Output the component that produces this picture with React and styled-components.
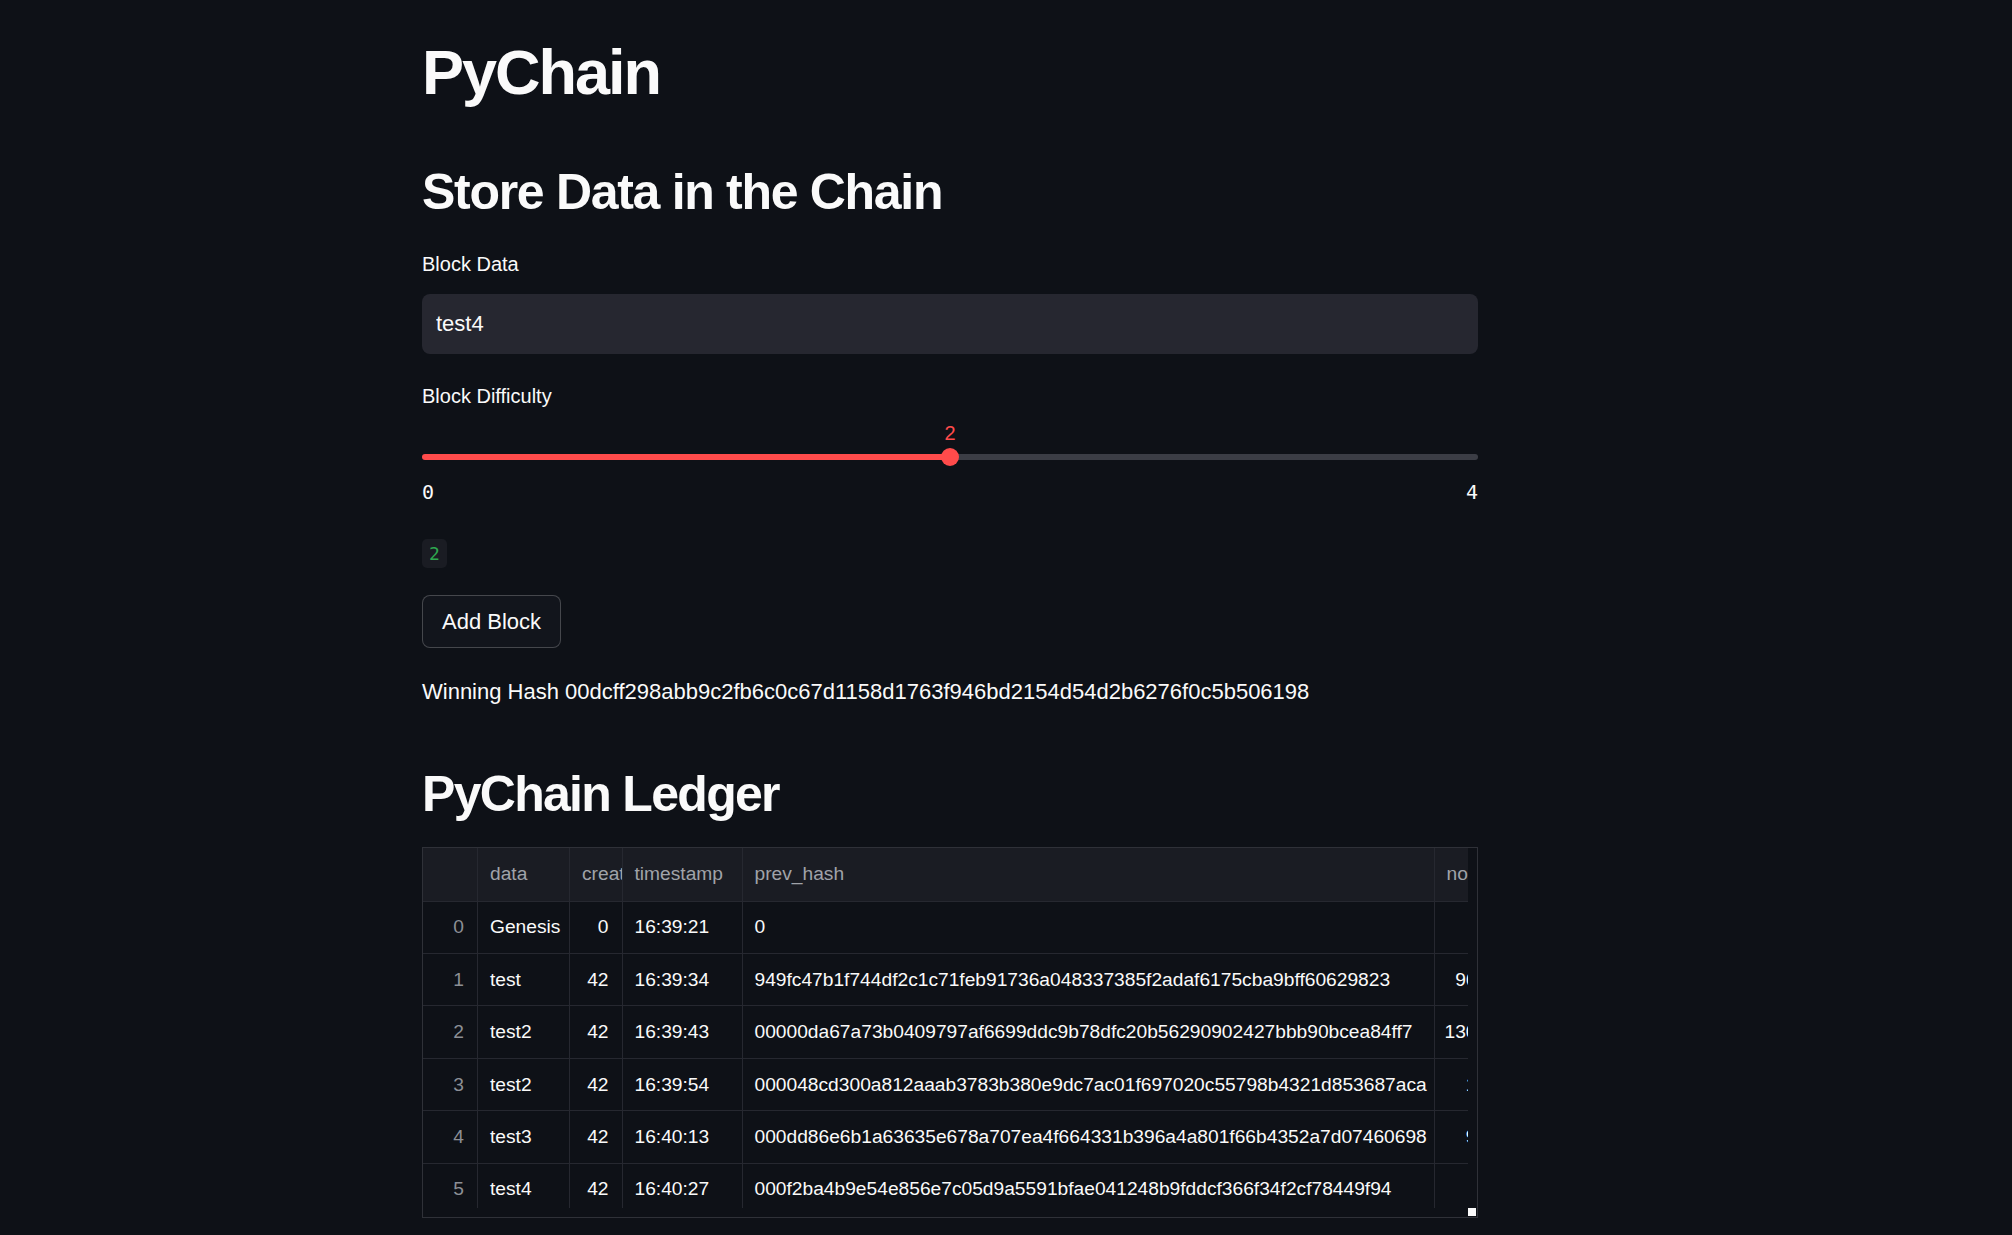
import React from "react";
import styled, { createGlobalStyle } from "styled-components";

const GlobalStyle = createGlobalStyle`
  html, body {
    margin: 0;
    padding: 0;
    background: #0e1117;
  }
  body {
    font-family: "Liberation Sans", Arial, sans-serif;
    color: #fafafa;
  }
  * { box-sizing: border-box; }
`;

const Page = styled.main`
  width: 1056px;
  margin-left: 422px;
  padding-top: 32px;
  padding-bottom: 18px;
  display: flex;
  flex-direction: column;
`;

const Title = styled.h1`
  margin: 0;
  font-size: 63px;
  line-height: 80px;
  font-weight: 700;
  letter-spacing: -2px;
`;

const Heading = styled.h2`
  margin: ${(p) => p.$top}px 0 0;
  font-size: 50px;
  line-height: 64px;
  font-weight: 700;
  letter-spacing: ${(p) => p.$spacing}px;
`;

const Label = styled.label`
  display: block;
  margin-top: ${(p) => p.$top}px;
  font-size: 20px;
  line-height: 28px;
  color: #fafafa;
`;

const TextInput = styled.input`
  display: block;
  width: 100%;
  height: 60px;
  margin-top: 16px;
  padding: 0 14px;
  border: none;
  border-radius: 8px;
  background: #262730;
  color: #fafafa;
  font-family: inherit;
  font-size: 22px;
  outline: none;
`;

const SliderWrap = styled.div`
  display: flex;
  flex-direction: column;
  margin-top: 11px;
`;

const ValueRow = styled.div`
  position: relative;
  height: 24px;
`;

const ValueText = styled.span`
  position: absolute;
  top: 0;
  transform: translateX(-50%);
  color: #ff4b4b;
  font-size: 20px;
  line-height: 24px;
`;

const TrackRow = styled.div`
  position: relative;
  height: 18px;
  margin-top: 3px;
  display: flex;
  align-items: center;
`;

const Rail = styled.div`
  flex: 1;
  height: 6px;
  border-radius: 3px;
`;

const Thumb = styled.div`
  position: absolute;
  top: 0;
  width: 18px;
  height: 18px;
  border-radius: 50%;
  background: #ff4b4b;
  transform: translateX(-50%);
`;

const Ticks = styled.div`
  display: flex;
  justify-content: space-between;
  margin-top: 14px;
  font-family: "DejaVu Sans Mono", monospace;
  font-size: 20px;
  line-height: 24px;
  color: #fafafa;
`;

const CodeBadge = styled.code`
  align-self: flex-start;
  margin-top: 35px;
  height: 29px;
  padding: 0 7px;
  border-radius: 5px;
  background: #1a1c23;
  color: #2ea84f;
  font-family: "DejaVu Sans Mono", monospace;
  font-size: 18px;
  line-height: 29px;
`;

const Button = styled.button`
  align-self: flex-start;
  margin-top: 27px;
  height: 53px;
  padding: 0 19px;
  border: 1px solid rgba(250, 250, 250, 0.22);
  border-radius: 8px;
  background: #12151c;
  color: #fafafa;
  font-family: inherit;
  font-size: 22px;
  cursor: pointer;
`;

const Paragraph = styled.p`
  margin: 29px 0 0;
  font-size: 22px;
  line-height: 30px;
`;

const TableFrame = styled.div`
  margin-top: 21px;
  width: 1056px;
  height: 371px;
  border: 1px solid #2f3138;
  display: grid;
  grid-template-columns: 1fr 9px;
  grid-template-rows: 1fr 9px;
  background: #0e1117;
`;

const Viewport = styled.div`
  overflow: hidden;
  grid-column: 1;
  grid-row: 1;
`;

const Corner = styled.div`
  grid-column: 2;
  grid-row: 2;
  display: flex;
  align-items: flex-start;
`;

const CornerSquare = styled.span`
  width: 8px;
  height: 8px;
  background: #fafafa;
`;

const Grid = styled.div`
  display: grid;
  grid-template-columns: 55px 92px 52.5px 120px 692px 88px;
  grid-template-rows: 53.7px;
  grid-auto-rows: 52.4px;
  width: max-content;
  font-size: 19.2px;
`;

const Cell = styled.div`
  display: flex;
  align-items: center;
  justify-content: ${(p) => (p.$num ? "flex-end" : "flex-start")};
  padding: ${(p) => (p.$num ? "0 13px 0 0" : "0 0 0 12px")};
  border-right: 1px solid #262830;
  border-bottom: 1px solid #262830;
  white-space: nowrap;
  overflow: hidden;
  color: ${(p) => (p.$muted ? "#8c8f95" : "#fafafa")};
`;

const HeadCell = styled(Cell)`
  background: #1a1c23;
  color: #a0a3a9;
  justify-content: flex-start;
  padding: 0 0 0 12px;
`;

const columns = ["", "data", "creator_id", "timestamp", "prev_hash", "nonce"];

const rows = [
  ["Genesis", 0, "16:39:21", "0", 0],
  ["test", 42, "16:39:34", "949fc47b1f744df2c1c71feb91736a048337385f2adaf6175cba9bff60629823", 96153],
  ["test2", 42, "16:39:43", "00000da67a73b0409797af6699ddc9b78dfc20b56290902427bbb90bcea84ff7", 130823],
  ["test2", 42, "16:39:54", "000048cd300a812aaab3783b380e9dc7ac01f697020c55798b4321d853687aca", 1786],
  ["test3", 42, "16:40:13", "000dd86e6b1a63635e678a707ea4f664331b396a4a801f66b4352a7d07460698", 9547],
  ["test4", 42, "16:40:27", "000f2ba4b9e54e856e7c05d9a5591bfae041248b9fddcf366f34f2cf78449f94", 575],
];

function Slider({ min, max, value }) {
  const pct = ((value - min) / (max - min)) * 100;
  return (
    <SliderWrap>
      <ValueRow>
        <ValueText style={{ left: `${pct}%` }}>{value}</ValueText>
      </ValueRow>
      <TrackRow>
        <Rail
          style={{
            background: `linear-gradient(to right, #ff4b4b 0%, #ff4b4b ${pct}%, #3b3d45 ${pct}%, #3b3d45 100%)`,
          }}
        />
        <Thumb style={{ left: `${pct}%` }} />
      </TrackRow>
      <Ticks>
        <span>{min}</span>
        <span>{max}</span>
      </Ticks>
    </SliderWrap>
  );
}

function Ledger() {
  return (
    <TableFrame>
      <Viewport>
        <Grid>
          {columns.map((c, i) => (
            <HeadCell key={"h" + i}>{c}</HeadCell>
          ))}
          {rows.map((r, i) => (
            <React.Fragment key={i}>
              <Cell $num $muted>{i}</Cell>
              <Cell>{r[0]}</Cell>
              <Cell $num>{r[1]}</Cell>
              <Cell>{r[2]}</Cell>
              <Cell>{r[3]}</Cell>
              <Cell $num>{r[4]}</Cell>
            </React.Fragment>
          ))}
        </Grid>
      </Viewport>
      <Corner>
        <CornerSquare />
      </Corner>
    </TableFrame>
  );
}

export default function App() {
  return (
    <>
      <GlobalStyle />
      <Page>
        <Title>PyChain</Title>
        <Heading $top={48} $spacing={-1.3}>Store Data in the Chain</Heading>
        <Label $top={26}>Block Data</Label>
        <TextInput defaultValue="test4" />
        <Label $top={28}>Block Difficulty</Label>
        <Slider min={0} max={4} value={2} />
        <CodeBadge>2</CodeBadge>
        <Button>Add Block</Button>
        <Paragraph>
          Winning Hash 00dcff298abb9c2fb6c0c67d1158d1763f946bd2154d54d2b6276f0c5b506198
        </Paragraph>
        <Heading $top={55} $spacing={-1.7}>PyChain Ledger</Heading>
        <Ledger />
      </Page>
    </>
  );
}
